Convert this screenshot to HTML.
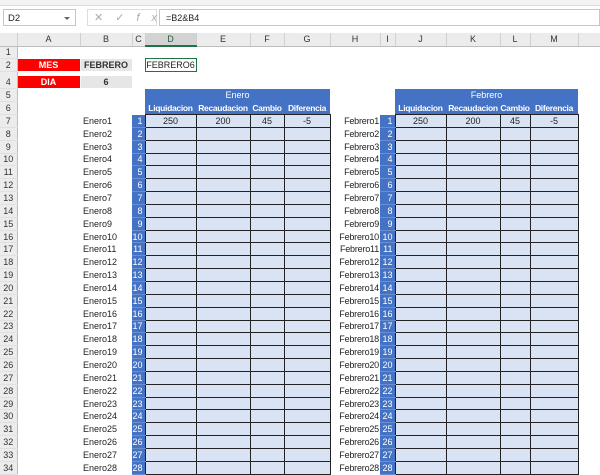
<!DOCTYPE html>
<html><head><meta charset="utf-8"><style>
*{margin:0;padding:0;box-sizing:border-box}
body{width:600px;height:470px;overflow:hidden;background:#fff;font-family:"Liberation Sans",Arial,sans-serif;font-size:9px;color:#222;position:relative}
.top{position:absolute;left:0;top:0;width:600px;height:6px;background:#f3f3f3;border-bottom:1px solid #ddd}
.bar{position:absolute;left:0;top:6px;width:600px;height:27px;background:#fff}
.nb{position:absolute;left:3px;top:3px;width:73px;height:17px;border:1px solid #c6c6c6;padding:3px 4px;font-size:9.5px}
.nb:after{content:"";position:absolute;right:5px;top:7px;border:3px solid transparent;border-top-color:#666}
.fx{position:absolute;left:87px;top:3px;width:70px;height:17px;border:1px solid #ddd;color:#aaa;font-size:11px;padding:1px 6px;letter-spacing:12px}
.fb{position:absolute;left:159px;top:3px;width:441px;height:17px;border:1px solid #c6c6c6;padding:3px 6px}
table{position:absolute;left:0;top:33px;border-collapse:collapse;table-layout:fixed;width:600px}
td,th{padding:0;overflow:hidden;white-space:nowrap;font-weight:normal;height:12.85px;line-height:10px;font-size:9px}
thead th{background:#ececec;height:13px;border-right:1px solid #d0d0d0;border-bottom:1px solid #bdbdbd;color:#333;font-size:9px}
thead th.sel{background:#d3d3d3;border-bottom:2px solid #217346;color:#1d5e37}
tbody th{background:#ececec;border-right:1px solid #bdbdbd;border-bottom:1px solid #e0e0e0;color:#333;font-size:9px;text-align:center}
.e{text-align:left;padding-left:3px}
.f{text-align:right;padding-right:1px;letter-spacing:-.2px}
.n{background:#4472c4;color:#fff;text-align:right;padding-right:2px;border-bottom:1px solid #6a8fd0}
.c{background:#dae3f3;border:1px solid #222;text-align:center}
.h{background:#4472c4;color:#fff;text-align:center}
.hb{background:#4472c4;color:#fff;text-align:center;font-weight:bold;font-size:8.5px;letter-spacing:-.3px}
.red{background:#ff0000;color:#fff;font-weight:bold;text-align:center;border:1px solid #fff}
.gr{background:#e7e6e6;font-weight:bold;text-align:center;color:#333;border:1px solid #fff}
.act{border:1px solid #217346;text-align:center;font-size:9px}
tr.r3 th,tr.r3 td{height:4px;font-size:0;line-height:0;border-bottom:0}
</style></head><body>
<div class="top"></div>
<div class="bar"><div class="nb">D2</div><div class="fx">✕✓<i>fx</i></div><div class="fb">=B2&amp;B4</div></div>
<table>
<colgroup><col style="width:17px"><col style="width:63px"><col style="width:52px"><col style="width:13px"><col style="width:51px"><col style="width:54px"><col style="width:34px"><col style="width:46px"><col style="width:50px"><col style="width:15px"><col style="width:51px"><col style="width:54px"><col style="width:30px"><col style="width:48px"><col style="width:22px"></colgroup>
<thead><tr><th></th><th>A</th><th>B</th><th>C</th><th class="sel">D</th><th>E</th><th>F</th><th>G</th><th>H</th><th>I</th><th>J</th><th>K</th><th>L</th><th>M</th><th></th></tr></thead>
<tbody>
<tr><th style="height:12px">1</th><td colspan="14"></td></tr>
<tr><th style="height:13px">2</th><td class="red">MES</td><td class="gr">FEBRERO</td><td></td><td class="act">FEBRERO6</td><td colspan="10"></td></tr>
<tr class="r3"><th>3</th><td colspan="14"></td></tr>
<tr><th style="height:13px">4</th><td class="red">DIA</td><td class="gr">6</td><td colspan="12"></td></tr>
<tr><th>5</th><td></td><td></td><td></td><td class="h" colspan="4">Enero</td><td></td><td></td><td class="h" colspan="4">Febrero</td><td></td></tr>
<tr><th>6</th><td></td><td></td><td></td><td class="hb">Liquidacion</td><td class="hb">Recaudacion</td><td class="hb">Cambio</td><td class="hb">Diferencia</td><td></td><td></td><td class="hb">Liquidacion</td><td class="hb">Recaudacion</td><td class="hb">Cambio</td><td class="hb">Diferencia</td><td></td></tr>
<tr><th>7</th><td></td><td class="e">Enero1</td><td class="n">1</td><td class="c">250</td><td class="c">200</td><td class="c">45</td><td class="c">-5</td><td class="f">Febrero1</td><td class="n">1</td><td class="c">250</td><td class="c">200</td><td class="c">45</td><td class="c">-5</td><td></td></tr>
<tr><th>8</th><td></td><td class="e">Enero2</td><td class="n">2</td><td class="c"></td><td class="c"></td><td class="c"></td><td class="c"></td><td class="f">Febrero2</td><td class="n">2</td><td class="c"></td><td class="c"></td><td class="c"></td><td class="c"></td><td></td></tr>
<tr><th>9</th><td></td><td class="e">Enero3</td><td class="n">3</td><td class="c"></td><td class="c"></td><td class="c"></td><td class="c"></td><td class="f">Febrero3</td><td class="n">3</td><td class="c"></td><td class="c"></td><td class="c"></td><td class="c"></td><td></td></tr>
<tr><th>10</th><td></td><td class="e">Enero4</td><td class="n">4</td><td class="c"></td><td class="c"></td><td class="c"></td><td class="c"></td><td class="f">Febrero4</td><td class="n">4</td><td class="c"></td><td class="c"></td><td class="c"></td><td class="c"></td><td></td></tr>
<tr><th>11</th><td></td><td class="e">Enero5</td><td class="n">5</td><td class="c"></td><td class="c"></td><td class="c"></td><td class="c"></td><td class="f">Febrero5</td><td class="n">5</td><td class="c"></td><td class="c"></td><td class="c"></td><td class="c"></td><td></td></tr>
<tr><th>12</th><td></td><td class="e">Enero6</td><td class="n">6</td><td class="c"></td><td class="c"></td><td class="c"></td><td class="c"></td><td class="f">Febrero6</td><td class="n">6</td><td class="c"></td><td class="c"></td><td class="c"></td><td class="c"></td><td></td></tr>
<tr><th>13</th><td></td><td class="e">Enero7</td><td class="n">7</td><td class="c"></td><td class="c"></td><td class="c"></td><td class="c"></td><td class="f">Febrero7</td><td class="n">7</td><td class="c"></td><td class="c"></td><td class="c"></td><td class="c"></td><td></td></tr>
<tr><th>14</th><td></td><td class="e">Enero8</td><td class="n">8</td><td class="c"></td><td class="c"></td><td class="c"></td><td class="c"></td><td class="f">Febrero8</td><td class="n">8</td><td class="c"></td><td class="c"></td><td class="c"></td><td class="c"></td><td></td></tr>
<tr><th>15</th><td></td><td class="e">Enero9</td><td class="n">9</td><td class="c"></td><td class="c"></td><td class="c"></td><td class="c"></td><td class="f">Febrero9</td><td class="n">9</td><td class="c"></td><td class="c"></td><td class="c"></td><td class="c"></td><td></td></tr>
<tr><th>16</th><td></td><td class="e">Enero10</td><td class="n">10</td><td class="c"></td><td class="c"></td><td class="c"></td><td class="c"></td><td class="f">Febrero10</td><td class="n">10</td><td class="c"></td><td class="c"></td><td class="c"></td><td class="c"></td><td></td></tr>
<tr><th>17</th><td></td><td class="e">Enero11</td><td class="n">11</td><td class="c"></td><td class="c"></td><td class="c"></td><td class="c"></td><td class="f">Febrero11</td><td class="n">11</td><td class="c"></td><td class="c"></td><td class="c"></td><td class="c"></td><td></td></tr>
<tr><th>18</th><td></td><td class="e">Enero12</td><td class="n">12</td><td class="c"></td><td class="c"></td><td class="c"></td><td class="c"></td><td class="f">Febrero12</td><td class="n">12</td><td class="c"></td><td class="c"></td><td class="c"></td><td class="c"></td><td></td></tr>
<tr><th>19</th><td></td><td class="e">Enero13</td><td class="n">13</td><td class="c"></td><td class="c"></td><td class="c"></td><td class="c"></td><td class="f">Febrero13</td><td class="n">13</td><td class="c"></td><td class="c"></td><td class="c"></td><td class="c"></td><td></td></tr>
<tr><th>20</th><td></td><td class="e">Enero14</td><td class="n">14</td><td class="c"></td><td class="c"></td><td class="c"></td><td class="c"></td><td class="f">Febrero14</td><td class="n">14</td><td class="c"></td><td class="c"></td><td class="c"></td><td class="c"></td><td></td></tr>
<tr><th>21</th><td></td><td class="e">Enero15</td><td class="n">15</td><td class="c"></td><td class="c"></td><td class="c"></td><td class="c"></td><td class="f">Febrero15</td><td class="n">15</td><td class="c"></td><td class="c"></td><td class="c"></td><td class="c"></td><td></td></tr>
<tr><th>22</th><td></td><td class="e">Enero16</td><td class="n">16</td><td class="c"></td><td class="c"></td><td class="c"></td><td class="c"></td><td class="f">Febrero16</td><td class="n">16</td><td class="c"></td><td class="c"></td><td class="c"></td><td class="c"></td><td></td></tr>
<tr><th>23</th><td></td><td class="e">Enero17</td><td class="n">17</td><td class="c"></td><td class="c"></td><td class="c"></td><td class="c"></td><td class="f">Febrero17</td><td class="n">17</td><td class="c"></td><td class="c"></td><td class="c"></td><td class="c"></td><td></td></tr>
<tr><th>24</th><td></td><td class="e">Enero18</td><td class="n">18</td><td class="c"></td><td class="c"></td><td class="c"></td><td class="c"></td><td class="f">Febrero18</td><td class="n">18</td><td class="c"></td><td class="c"></td><td class="c"></td><td class="c"></td><td></td></tr>
<tr><th>25</th><td></td><td class="e">Enero19</td><td class="n">19</td><td class="c"></td><td class="c"></td><td class="c"></td><td class="c"></td><td class="f">Febrero19</td><td class="n">19</td><td class="c"></td><td class="c"></td><td class="c"></td><td class="c"></td><td></td></tr>
<tr><th>26</th><td></td><td class="e">Enero20</td><td class="n">20</td><td class="c"></td><td class="c"></td><td class="c"></td><td class="c"></td><td class="f">Febrero20</td><td class="n">20</td><td class="c"></td><td class="c"></td><td class="c"></td><td class="c"></td><td></td></tr>
<tr><th>27</th><td></td><td class="e">Enero21</td><td class="n">21</td><td class="c"></td><td class="c"></td><td class="c"></td><td class="c"></td><td class="f">Febrero21</td><td class="n">21</td><td class="c"></td><td class="c"></td><td class="c"></td><td class="c"></td><td></td></tr>
<tr><th>28</th><td></td><td class="e">Enero22</td><td class="n">22</td><td class="c"></td><td class="c"></td><td class="c"></td><td class="c"></td><td class="f">Febrero22</td><td class="n">22</td><td class="c"></td><td class="c"></td><td class="c"></td><td class="c"></td><td></td></tr>
<tr><th>29</th><td></td><td class="e">Enero23</td><td class="n">23</td><td class="c"></td><td class="c"></td><td class="c"></td><td class="c"></td><td class="f">Febrero23</td><td class="n">23</td><td class="c"></td><td class="c"></td><td class="c"></td><td class="c"></td><td></td></tr>
<tr><th>30</th><td></td><td class="e">Enero24</td><td class="n">24</td><td class="c"></td><td class="c"></td><td class="c"></td><td class="c"></td><td class="f">Febrero24</td><td class="n">24</td><td class="c"></td><td class="c"></td><td class="c"></td><td class="c"></td><td></td></tr>
<tr><th>31</th><td></td><td class="e">Enero25</td><td class="n">25</td><td class="c"></td><td class="c"></td><td class="c"></td><td class="c"></td><td class="f">Febrero25</td><td class="n">25</td><td class="c"></td><td class="c"></td><td class="c"></td><td class="c"></td><td></td></tr>
<tr><th>32</th><td></td><td class="e">Enero26</td><td class="n">26</td><td class="c"></td><td class="c"></td><td class="c"></td><td class="c"></td><td class="f">Febrero26</td><td class="n">26</td><td class="c"></td><td class="c"></td><td class="c"></td><td class="c"></td><td></td></tr>
<tr><th>33</th><td></td><td class="e">Enero27</td><td class="n">27</td><td class="c"></td><td class="c"></td><td class="c"></td><td class="c"></td><td class="f">Febrero27</td><td class="n">27</td><td class="c"></td><td class="c"></td><td class="c"></td><td class="c"></td><td></td></tr>
<tr><th>34</th><td></td><td class="e">Enero28</td><td class="n">28</td><td class="c"></td><td class="c"></td><td class="c"></td><td class="c"></td><td class="f">Febrero28</td><td class="n">28</td><td class="c"></td><td class="c"></td><td class="c"></td><td class="c"></td><td></td></tr>
</tbody></table>
</body></html>
